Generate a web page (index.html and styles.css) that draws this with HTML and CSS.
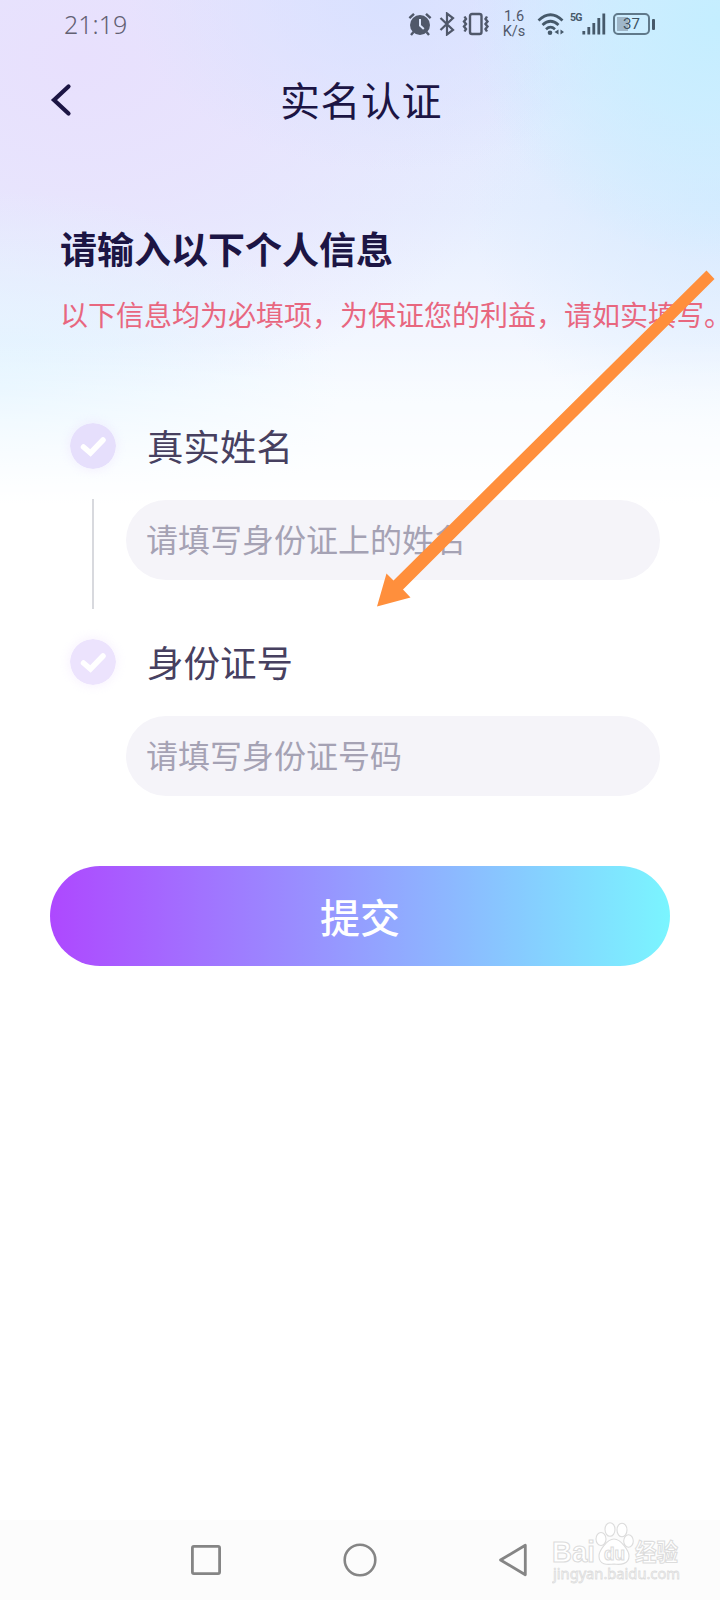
FILE: index.html
```html
<!DOCTYPE html>
<html lang="zh-CN">
<head>
<meta charset="utf-8">
<title>实名认证</title>
<link rel="stylesheet" href="styles.css">
</head>
<body>
<div class="screen">
  <div class="status">
    <span class="clock">21:19</span>
    <div class="status-icons">
      <svg class="i-alarm" width="24" height="24" viewBox="0 0 24 24"><circle cx="12" cy="13" r="10" fill="#50586a"/><path d="M1.400 6.200 6 1.800M22.600 6.200 18 1.800M5.500 20 3 23M18.500 20 21 23" stroke="#50586a" stroke-width="2.400" fill="none"/><path d="M12 7v6.500l3.800 3.500" stroke="#dde6fd" stroke-width="2" fill="none"/></svg>
      <svg class="i-bt" width="16" height="24" viewBox="0 0 16 24"><path d="M1.500 6 14 18 8 22.500V1.500L14 6 1.500 18" fill="none" stroke="#50586a" stroke-width="2.200"/></svg>
      <svg class="i-vib" width="28" height="24" viewBox="0 0 28 24"><rect x="8" y="2" width="11.500" height="20" rx="2" fill="none" stroke="#50586a" stroke-width="2.400"/><path d="M2.500 4.500 4 7 2 9.500 4 12 2 14.500 4 17l-1.500 2.500M25 4.500 23.500 7l2 2.500-2 2.500 2 2.500-2 2.500 1.500 2.500" fill="none" stroke="#50586a" stroke-width="2.400"/></svg>
      <div class="speed"><span>1.6</span><span>K/s</span></div>
      <svg class="i-wifi" width="28" height="24" viewBox="0 0 28 24"><path d="M1.500 8.500Q13.500-3 25.500 8.500M5.500 13Q13.500 5.500 21.500 13M9 17.200q4.500-4 9 0" fill="none" stroke="#46596a" stroke-width="2.700"/><circle cx="13" cy="20.800" r="2.300" fill="#46596a"/><path d="M17.500 20l4-2.500v5zM23.500 17.500l3.500 2.500-3.500 2.500z" fill="#46596a"/></svg>
      <div class="signal"><span class="fiveg">5G</span><svg width="24" height="24" viewBox="0 0 24 24"><path d="M1.800 19v3.500M6.800 15v7.500M11.800 11v11.500M16.800 6v16.500M21.800 1.500v21" stroke="#46596a" stroke-width="2.800" fill="none"/></svg></div>
      <div class="battery"><div class="cell"><span>37</span></div><i></i></div>
    </div>
  </div>

  <header class="nav">
    <svg class="back" width="24" height="34" viewBox="0 0 24 34"><path d="M19.500 3.500 5 17l14.500 13.500" fill="none" stroke="#1c1544" stroke-width="4.200" stroke-linecap="round"/></svg>
    <h1 class="title">实名认证</h1>
  </header>

  <main class="form">
    <h2 class="heading">请输入以下个人信息</h2>
    <p class="notice">以下信息均为必填项，为保证您的利益，请如实填写。</p>

    <section class="field">
      <div class="label-row">
        <svg class="check" width="46" height="46" viewBox="0 0 46 46"><circle cx="23" cy="23" r="23" fill="#e6dffc"/><path d="m13.500 24 7 6L33 17" fill="none" stroke="#fff" stroke-width="5.500" stroke-linecap="round"/></svg>
        <label class="label" for="name">真实姓名</label>
      </div>
      <div class="input-row">
        <div class="rail"></div>
        <input class="input" id="name" type="text" placeholder="请填写身份证上的姓名">
      </div>
    </section>

    <section class="field">
      <div class="label-row">
        <svg class="check" width="46" height="46" viewBox="0 0 46 46"><circle cx="23" cy="23" r="23" fill="#ece3fd"/><path d="m13.500 24 7 6L33 17" fill="none" stroke="#fff" stroke-width="5.500" stroke-linecap="round"/></svg>
        <label class="label" for="idno">身份证号</label>
      </div>
      <div class="input-row">
        <div class="rail rail-empty"></div>
        <input class="input" id="idno" type="text" placeholder="请填写身份证号码">
      </div>
    </section>

    <button class="submit" type="button">提交</button>
  </main>

  <footer class="sysnav">
    <svg width="30" height="30" viewBox="0 0 30 30"><rect x="1.400" y="1.400" width="27.200" height="27.200" rx="1.500" fill="none" stroke="#858585" stroke-width="2.800"/></svg>
    <svg width="34" height="34" viewBox="0 0 34 34"><circle cx="17" cy="17" r="15.300" fill="none" stroke="#858585" stroke-width="2.600"/></svg>
    <svg width="28" height="34" viewBox="0 0 28 34"><path d="M26.300 2.200v29.600L1.500 17z" fill="none" stroke="#858585" stroke-width="2.800" stroke-linejoin="round"/></svg>
  </footer>

  <svg class="arrow" width="340" height="338" viewBox="377 270 340 338"><path d="M706.500 270.500 714.500 279 403 589.500 410.500 597.500 377 606.500 386.500 573.500 393.500 580.500z" fill="#ff8f3c"/></svg>

  <div class="watermark">
    <svg width="136" height="64" viewBox="0 0 136 64">
      <g fill="#fff" stroke="#dcdcdc" stroke-width="1.100">
        <text class="wm-brand" x="0" y="41" textLength="43" lengthAdjust="spacingAndGlyphs">Bai</text>
        <ellipse cx="49" cy="18" rx="5" ry="6.500"/><ellipse cx="58" cy="8.500" rx="5" ry="6.800"/><ellipse cx="70" cy="9" rx="5" ry="6.800"/><ellipse cx="76.500" cy="20" rx="4.800" ry="6.300"/>
        <path d="M62 18c-7 0-15 12-15 17 0 9 8 9 15 8 7 1 15 0 15-8 0-5-8-17-15-17z"/>
        <text class="wm-du" x="52" y="39" textLength="21" lengthAdjust="spacingAndGlyphs">du</text>
        <text class="wm-cn" x="83" y="40" textLength="43" lengthAdjust="spacingAndGlyphs">经验</text>
      </g>
      <text class="wm-url" x="1" y="58" textLength="127" lengthAdjust="spacingAndGlyphs">jingyan.baidu.com</text>
    </svg>
  </div>
</div>
</body>
</html>
```
FILE: styles.css
```css
* { box-sizing: border-box; }

body {
  margin: 0;
  font-family: "Liberation Sans", "Noto Sans CJK SC", sans-serif;
}

.screen {
  position: relative;
  display: flex;
  flex-direction: column;
  width: 720px;
  height: 1600px;
  overflow: hidden;
  background:
    linear-gradient(to bottom, rgba(255,255,255,0) 0, rgba(255,255,255,0) 340px, rgba(255,255,255,.55) 430px, #fff 505px),
    radial-gradient(ellipse 250px 240px at 720px 20px, #c4eeff 0, rgba(200,238,255,.8) 40%, rgba(210,236,255,0) 100%),
    radial-gradient(ellipse 250px 240px at 720px 200px, rgba(214,234,255,.85) 0, rgba(220,236,255,0) 100%),
    radial-gradient(ellipse 260px 170px at 390px 0, #d9e1ff 0, rgba(220,226,255,0) 100%),
    radial-gradient(ellipse 340px 200px at 0 390px, #e2f4ff 0, rgba(228,245,255,0) 100%),
    radial-gradient(ellipse 480px 340px at 80px 60px, #e8e0fd 0, rgba(232,227,253,.9) 40%, rgba(236,238,255,0) 100%),
    linear-gradient(to bottom, #e0e8ff 0, #e6eefe 210px, #f2f6ff 330px, #f5faff 400px);
  background-repeat: no-repeat;
  background-size: 100% 100%, 100% 505px, 100% 505px, 100% 505px, 100% 505px, 100% 505px, 100% 505px;
}

.status {
  display: flex;
  justify-content: space-between;
  height: 48px;
  padding: 0 65px 0 64px;
  align-items: center;
}

.clock {
  font: 25px/30px "Noto Sans", sans-serif;
  font-weight: 300;
  letter-spacing: 0;
  color: #626072;
}

.status-icons { display: flex; align-items: center; color: #50586a; }
.i-bt { margin-left: 7px; }
.i-vib { margin-left: 7px; }

.speed {
  display: flex;
  flex-direction: column;
  align-items: center;
  width: 26px;
  margin-left: 11px;
  font: 14.500px/15px Roboto, sans-serif;
}
.speed span { height: 15px; }

.i-wifi { margin-left: 10px; }
.signal { display: flex; margin-left: 5px; }
.fiveg { width: 12px; font: bold 10.500px/12px "Roboto", sans-serif; letter-spacing: -.8px; color: #46596a; }

.battery { display: flex; align-items: center; gap: 2px; margin-left: 7px; }
.battery i { width: 3px; height: 11px; border-radius: 1px; background: #46596a; }
.cell {
  width: 37px;
  height: 22px;
  border: 2px solid #60798a;
  border-radius: 5px;
  background: linear-gradient(#9fb6c8, #9fb6c8) 2px 2px / 11px 14px no-repeat;
  font: 15px/18px Roboto, sans-serif;
  text-align: center;
  color: #3e5261;
}

.nav {
  display: grid;
  grid-template-columns: 98px 1fr 98px;
  align-items: center;
  height: 104px;
}
.back { margin-left: 49px; }
.title {
  margin: 0;
  padding: 3px 0 0 2px;
  text-align: center;
  font-size: 40px;
  font-weight: 400;
  line-height: 56px;
  letter-spacing: .5px;
  color: #1c1544;
}

.form { flex: 1; padding: 74px 0 0; }
.heading {
  margin: 0 0 0 60px;
  font-size: 37px;
  line-height: 52px;
  font-weight: 700;
  color: #1c1544;
}
.notice {
  margin: 19px 0 0 60px;
  font-size: 28px;
  line-height: 40px;
  white-space: nowrap;
  color: #e8677f;
}

.field { height: 216px; }
.notice + .field { margin-top: 86px; }
.label-row { display: flex; align-items: center; height: 46px; padding-left: 70px; gap: 31px; }
.check { border-radius: 50%; box-shadow: 0 0 12px rgba(232, 215, 252, .4); }
.label { font-size: 36.500px; line-height: 46px; color: #474060; padding-top: 5px; }
.input-row { display: flex; gap: 32px; padding: 30px 60px 0 92px; }
.rail { width: 2px; height: 110px; background: #d8d9de; }
.rail-empty { background: none; }
.input {
  width: 534px;
  height: 80px;
  margin-top: 1px;
  padding: 3px 20px 0;
  border: 0;
  border-radius: 40px;
  background: #f5f4f9;
  font: 32px/46px "Liberation Sans", "Noto Sans CJK SC", sans-serif;
}
.input::placeholder { color: #a5a2b4; opacity: 1; }

.submit {
  display: block;
  width: 620px;
  height: 100px;
  margin: 11px auto 0;
  padding: 5px 0 0;
  border: 0;
  border-radius: 50px;
  background: linear-gradient(90deg, #ae48ff, #7af5ff);
  font: 500 40px/56px "Liberation Sans", "Noto Sans CJK SC", sans-serif;
  color: #fff;
}

.sysnav {
  display: flex;
  justify-content: space-between;
  align-items: center;
  height: 80px;
  padding: 0 193px 0 191px;
  background: #fcfcfc;
}

/* Pointer drawn over the form */
.arrow { position: absolute; left: 377px; top: 270px; }

.watermark { position: absolute; left: 552px; top: 1521px; height: 64px; }
.wm-brand { font: bold 29px "Liberation Sans", sans-serif; }
.wm-du { font: bold 19px "Liberation Sans", sans-serif; }
.wm-cn { font: bold 24px "Noto Sans CJK SC", sans-serif; }
.wm-url { font: 14.500px "Noto Sans", sans-serif; fill: #fff; stroke: #dcdcdc; stroke-width: .8px; }
```
